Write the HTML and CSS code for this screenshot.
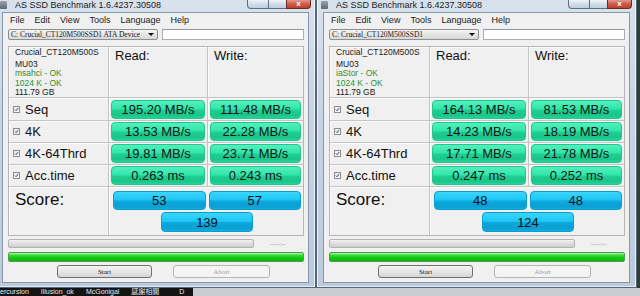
FILE: index.html
```html
<!DOCTYPE html>
<html lang="en">
  <head>
    <meta charset="UTF-8" />
    <meta name="viewport" content="width=device-width, initial-scale=1.0" />
    <title>AS SSD Benchmark</title>
    <link rel="stylesheet" href="styles.css">
  </head>
  <body>
    <div class="desktop">
      <div class="window">
        <div class="titlebar">
          <span class="app-icon"></span>
          <span class="title">AS SSD Benchmark 1.6.4237.30508</span>
          <div class="controls">
            <span class="ctl min"></span><span class="ctl max"></span><span class="ctl close">x</span>
          </div>
        </div>
        <div class="client">
          <div class="menu">
            <span>File</span><span>Edit</span><span>View</span><span>Tools</span><span>Language</span><span>Help</span>
          </div>
          <div class="drive-row">
            <div class="combo"><span class="drive">C: Crucial_CT120M500SSD1 ATA Device</span><span class="arrow"></span></div>
            <div class="textbox"></div>
          </div>
          <div class="panel">
            <div class="cell info">
              <div class="model">Crucial_CT120M500S</div>
              <div>MU03</div>
              <div class="ok">msahci - OK</div>
              <div class="ok">1024 K - OK</div>
              <div>111.79 GB</div>
            </div>
            <div class="cell head">Read:</div>
            <div class="cell head last">Write:</div>

            <div class="cell label"><span class="check"><svg viewBox="0 0 7 7"><path d="M1.3 3.6l1.6 1.6 2.8-3.6" /></svg></span>Seq</div>
            <div class="cell value"><div class="bar">195.20 MB/s</div></div>
            <div class="cell value last"><div class="bar">111.48 MB/s</div></div>

            <div class="cell label"><span class="check"><svg viewBox="0 0 7 7"><path d="M1.3 3.6l1.6 1.6 2.8-3.6" /></svg></span>4K</div>
            <div class="cell value"><div class="bar">13.53 MB/s</div></div>
            <div class="cell value last"><div class="bar">22.28 MB/s</div></div>

            <div class="cell label"><span class="check"><svg viewBox="0 0 7 7"><path d="M1.3 3.6l1.6 1.6 2.8-3.6" /></svg></span>4K-64Thrd</div>
            <div class="cell value"><div class="bar">19.81 MB/s</div></div>
            <div class="cell value last"><div class="bar">23.71 MB/s</div></div>

            <div class="cell label"><span class="check"><svg viewBox="0 0 7 7"><path d="M1.3 3.6l1.6 1.6 2.8-3.6" /></svg></span>Acc.time</div>
            <div class="cell value"><div class="bar">0.263 ms</div></div>
            <div class="cell value last"><div class="bar">0.243 ms</div></div>

            <div class="cell score-label">Score:</div>
            <div class="cell score">
              <div class="sbar">53</div>
              <div class="sbar">57</div>
              <div class="sbar total">139</div>
            </div>
          </div>
          <div class="progress-row">
            <div class="progress"></div>
            <span class="time">--:--:--</span>
          </div>
          <div class="total-bar"></div>
          <div class="buttons">
            <button class="btn">Start</button>
            <button class="btn" disabled>Abort</button>
          </div>
        </div>
      </div>

      <div class="window">
        <div class="titlebar">
          <span class="app-icon"></span>
          <span class="title">AS SSD Benchmark 1.6.4237.30508</span>
          <div class="controls">
            <span class="ctl min"></span><span class="ctl max"></span><span class="ctl close">x</span>
          </div>
        </div>
        <div class="client">
          <div class="menu">
            <span>File</span><span>Edit</span><span>View</span><span>Tools</span><span>Language</span><span>Help</span>
          </div>
          <div class="drive-row">
            <div class="combo"><span class="drive">C: Crucial_CT120M500SSD1</span><span class="arrow"></span></div>
            <div class="textbox"></div>
          </div>
          <div class="panel">
            <div class="cell info">
              <div class="model">Crucial_CT120M500S</div>
              <div>MU03</div>
              <div class="ok">iaStor - OK</div>
              <div class="ok">1024 K - OK</div>
              <div>111.79 GB</div>
            </div>
            <div class="cell head">Read:</div>
            <div class="cell head last">Write:</div>

            <div class="cell label"><span class="check"><svg viewBox="0 0 7 7"><path d="M1.3 3.6l1.6 1.6 2.8-3.6" /></svg></span>Seq</div>
            <div class="cell value"><div class="bar">164.13 MB/s</div></div>
            <div class="cell value last"><div class="bar">81.53 MB/s</div></div>

            <div class="cell label"><span class="check"><svg viewBox="0 0 7 7"><path d="M1.3 3.6l1.6 1.6 2.8-3.6" /></svg></span>4K</div>
            <div class="cell value"><div class="bar">14.23 MB/s</div></div>
            <div class="cell value last"><div class="bar">18.19 MB/s</div></div>

            <div class="cell label"><span class="check"><svg viewBox="0 0 7 7"><path d="M1.3 3.6l1.6 1.6 2.8-3.6" /></svg></span>4K-64Thrd</div>
            <div class="cell value"><div class="bar">17.71 MB/s</div></div>
            <div class="cell value last"><div class="bar">21.78 MB/s</div></div>

            <div class="cell label"><span class="check"><svg viewBox="0 0 7 7"><path d="M1.3 3.6l1.6 1.6 2.8-3.6" /></svg></span>Acc.time</div>
            <div class="cell value"><div class="bar">0.247 ms</div></div>
            <div class="cell value last"><div class="bar">0.252 ms</div></div>

            <div class="cell score-label">Score:</div>
            <div class="cell score">
              <div class="sbar">48</div>
              <div class="sbar">48</div>
              <div class="sbar total">124</div>
            </div>
          </div>
          <div class="progress-row">
            <div class="progress"></div>
            <span class="time">--:--:--</span>
          </div>
          <div class="total-bar"></div>
          <div class="buttons">
            <button class="btn">Start</button>
            <button class="btn" disabled>Abort</button>
          </div>
        </div>
      </div>
    </div>

    <div class="strip">
      <div class="tasks">
        <span>ercursion</span><span>Illusion_ok</span><span>McGonigal</span><span>感謝相關</span><span>D</span>
      </div>
    </div>
  </body>
</html>
```

FILE: styles.css
```css
body {
  margin: 0;
  width: 640px;
  height: 296px;
  overflow: hidden;
  background: #2e3f33;
  font-family: "Liberation Sans", Arial, sans-serif;
  color: #111;
}
.desktop {
  display: flex;
  height: 288px;
  margin-left: -5px;
}
.window {
  width: 321px;
  flex: none;
  box-sizing: border-box;
  display: flex;
  flex-direction: column;
  background: linear-gradient(#d8e2ec, #c6d4e3 40%, #bccbdc);
  border: 1px solid #56667a;
  border-top: none;
  padding: 0 6px 4px;
  box-shadow: inset 1px 0 rgba(255, 255, 255, 0.7), inset -1px 0 rgba(255, 255, 255, 0.7),
    inset 0 -1px rgba(255, 255, 255, 0.6);
}
.titlebar {
  height: 12px;
  display: flex;
  align-items: flex-start;
}
.app-icon {
  width: 7px;
  height: 8px;
  margin-top: 1px;
  margin-left: -2px;
  background: linear-gradient(#9aa3ad, #5c6670);
  border-radius: 1px;
}
.title {
  margin-left: 8px;
  font-size: 9px;
  line-height: 10px;
  color: #1b1b1b;
}
.controls {
  margin-left: auto;
  margin-right: -2px;
  display: flex;
  height: 9px;
}
.ctl {
  box-sizing: border-box;
  height: 9px;
  border: 1px solid #5f6f82;
  border-top: none;
  background: linear-gradient(#eef3f8, #d2dde9 50%, #bfcddc);
}
.min {
  width: 21px;
  border-radius: 0 0 0 4px;
  border-right: none;
}
.max {
  width: 18px;
  border-right: none;
}
.close {
  width: 25px;
  border-radius: 0 0 4px 0;
  border-color: #6b2a22;
  background: linear-gradient(#e2998e, #cf5a48 50%, #c1402d);
  color: #fff;
  font-size: 8px;
  line-height: 7px;
  text-align: center;
  font-weight: bold;
}
.client {
  flex: 1;
  box-sizing: border-box;
  display: flex;
  flex-direction: column;
  background: #f0f0f0;
  border: 1px solid #8796a8;
  padding: 0 4px 0 5px;
}
.menu {
  height: 15px;
  display: flex;
  gap: 10px;
  padding-left: 2px;
  font-size: 9px;
  line-height: 15px;
  color: #1a1a1a;
}
.drive-row {
  margin-top: 1px;
  display: flex;
  gap: 4px;
  height: 11px;
}
.combo {
  width: 150px;
  box-sizing: border-box;
  display: flex;
  align-items: center;
  justify-content: space-between;
  padding: 0 3px 0 2px;
  border: 1px solid #8e8f8f;
  border-radius: 2px;
  background: linear-gradient(#f5f5f5, #e4e4e4 50%, #d8d8d8);
  font-family: "Liberation Serif", "Times New Roman", serif;
  font-size: 7.5px;
  color: #222;
  white-space: nowrap;
  overflow: hidden;
}
.drive {
  overflow: hidden;
}
.arrow {
  flex: none;
  width: 0;
  height: 0;
  border-left: 3px solid transparent;
  border-right: 3px solid transparent;
  border-top: 3px solid #111;
}
.textbox {
  flex: 1;
  background: #fff;
  border: 1px solid #abadb3;
  border-top-color: #8f98a6;
}
.panel {
  margin-top: 6px;
  height: 190px;
  box-sizing: border-box;
  display: grid;
  grid-template-columns: 100px 99px 1fr;
  grid-template-rows: 51px 23px 22px 22px 22px 1fr;
  border: 1px solid #b5b5b5;
  box-shadow: inset 1px 1px #fff;
}
.cell {
  border-right: 1px solid #c4c4c4;
  border-bottom: 1px solid #c4c4c4;
  box-shadow: inset 1px 1px #fbfbfb;
}
.cell.last {
  border-right: none;
}
.info {
  padding: 1px 0 0 6px;
  font-size: 8.5px;
  line-height: 9.5px;
  color: #222;
}
.info .model {
  margin-bottom: 2px;
}
.info .ok {
  color: #2f8f2f;
}
.head {
  padding: 1px 0 0 6px;
  font-size: 13px;
  line-height: 15px;
  color: #111;
}
.label {
  display: flex;
  align-items: center;
  gap: 5px;
  padding-left: 4px;
  font-size: 13px;
}
.check {
  width: 7px;
  height: 7px;
  box-sizing: border-box;
  border: 1px solid #8d8d8d;
  background: linear-gradient(#ececec, #fff);
  display: flex;
}
.check svg {
  width: 5px;
  height: 5px;
}
.check path {
  fill: none;
  stroke: #2b3a6a;
  stroke-width: 1.4;
}
.value {
  display: flex;
  align-items: center;
  padding: 0 2px 0 2px;
}
.bar {
  flex: 1;
  height: 19px;
  box-sizing: border-box;
  display: flex;
  align-items: center;
  justify-content: center;
  border: 1px solid #25c58e;
  border-radius: 4px;
  background: linear-gradient(#52f0bd, #30e6aa 48%, #1fcf92 52%, #1ac58a 85%, #22d698);
  font-size: 13px;
  color: #151515;
}
.score-label {
  border-bottom: none;
  padding: 3px 0 0 6px;
  font-size: 17px;
  line-height: 20px;
}
.score {
  grid-column: 2 / span 2;
  border-right: none;
  border-bottom: none;
  display: grid;
  grid-template-columns: 1fr 1fr;
  grid-template-rows: 19px 20px;
  column-gap: 3px;
  row-gap: 2px;
  padding: 4px 2px 0 4px;
  align-content: start;
}
.sbar {
  box-sizing: border-box;
  display: flex;
  align-items: center;
  justify-content: center;
  border: 1px solid #0e9ccd;
  border-radius: 4px;
  background: linear-gradient(#3ad6fb, #1cc6f4 48%, #0ea8dc 52%, #0a9fd3 85%, #12b0e4);
  font-size: 13px;
  color: #111;
}
.sbar.total {
  grid-column: 1 / span 2;
  justify-self: center;
  width: 92px;
}
.progress-row {
  margin-top: 3px;
  height: 9px;
  display: flex;
  align-items: center;
}
.progress {
  width: 246px;
  height: 9px;
  box-sizing: border-box;
  border: 1px solid #b3b3b3;
  border-radius: 2px;
  background: linear-gradient(#f2f2f2, #dedede 50%, #cfcfcf);
}
.time {
  margin-left: 16px;
  font-size: 6px;
  color: #7a7a7a;
}
.total-bar {
  margin-top: 4px;
  height: 10px;
  box-sizing: border-box;
  border: 1px solid #4f9c4f;
  border-radius: 2px;
  background: linear-gradient(#b9f5b4, #3fdc3a 25%, #16c916 55%, #0fb30f);
}
.buttons {
  margin-top: 3px;
  display: flex;
  gap: 21px;
  padding-left: 49px;
}
.btn {
  width: 95px;
  height: 13px;
  padding: 0;
  border: 1px solid #707070;
  border-radius: 3px;
  background: linear-gradient(#f4f4f4, #e6e6e6 50%, #d6d6d6);
  font-family: "Liberation Serif", "Times New Roman", serif;
  font-size: 7px;
  color: #111;
}
.btn:disabled {
  width: 97px;
  border-color: #b4b7ba;
  background: #f4f4f4;
  color: #9c9c9c;
}
.strip {
  height: 8px;
  background: #c9ccd0;
  overflow: hidden;
}
.tasks {
  width: 193px;
  height: 8px;
  background: #141414;
  display: flex;
  gap: 12px;
  font-family: "Liberation Sans", "Noto Sans CJK TC", sans-serif;
  font-size: 7px;
  line-height: 8px;
  color: #e8e8e8;
  white-space: nowrap;
  overflow: hidden;
}
.tasks span:last-child {
  margin-left: 8px;
}
```
